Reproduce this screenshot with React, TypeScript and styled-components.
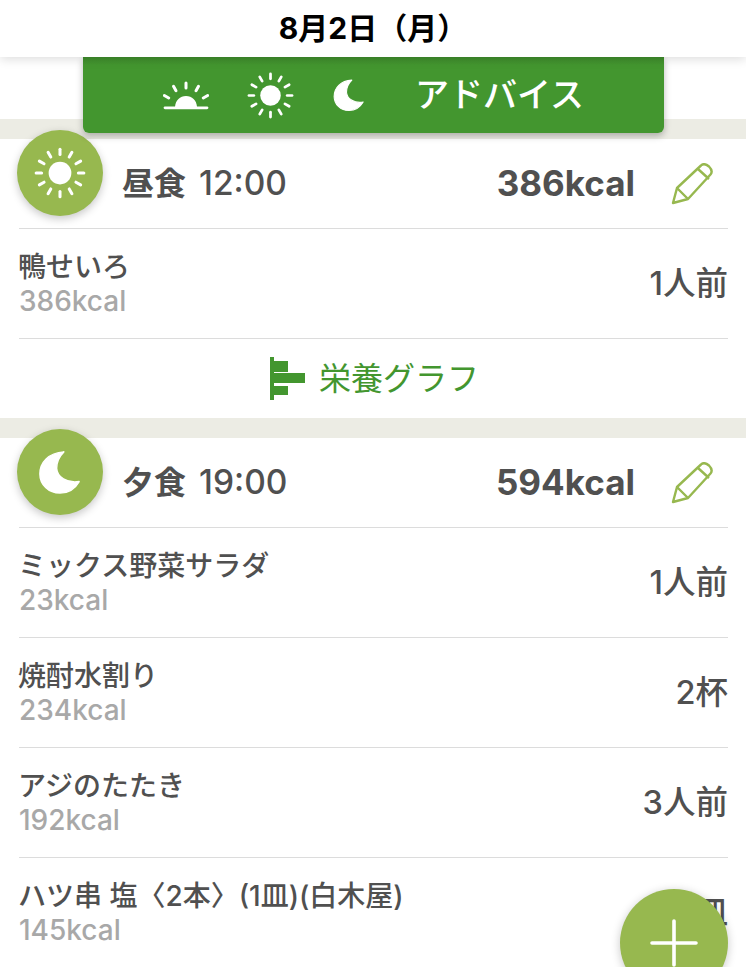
import React from 'react';
import styled, { createGlobalStyle } from 'styled-components';

const GlobalStyle = createGlobalStyle`
  html, body {
    margin: 0;
    padding: 0;
    height: 967px;
    overflow: hidden;
    background: #fff;
    font-family: Inter, 'Noto Sans CJK JP', sans-serif;
  }
  * { box-sizing: border-box; }
`;

const SunIcon = ({ size, color }: { size: number; color: string }) => (
  <svg width={size} height={size} viewBox='0 0 48 48'>
    <circle cx='24' cy='24' r='10.5' fill={color} />
    {[0, 30, 60, 90, 120, 150, 180, 210, 240, 270, 300, 330].map((deg) => (
      <line
        key={deg}
        x1='24'
        y1='2'
        x2='24'
        y2='7'
        stroke={color}
        strokeWidth='2.8'
        strokeLinecap='round'
        transform={`rotate(${deg} 24 24)`}
      />
    ))}
  </svg>
);

const MoonIcon = ({ size, color }: { size: number; color: string }) => (
  <svg width={size} height={size} viewBox='0 0 48 48'>
    <path
      d='M28 3 C12 4 3 14 3 26 C3 37 12 46 24 46 C33 46 40 41 44 34 C31 36 21 29 20.5 20 C20.5 13 23 8 28 3 Z'
      fill={color}
      stroke={color}
      strokeWidth='1.5'
      strokeLinejoin='round'
    />
  </svg>
);

const SunriseIcon = () => (
  <svg width='46' height='29' viewBox='0 0 46 29'>
    <path d='M12 26 C12.5 19 17 15 23 15 C29 15 33.5 19 34 26 Z' fill='#fff' />
    <line x1='2' y1='26.8' x2='44' y2='26.8' stroke='#fff' strokeWidth='2.8' strokeLinecap='round' />
    {[-60, -30, 0, 30, 60].map((deg) => (
      <line
        key={deg}
        x1='23'
        y1='2'
        x2='23'
        y2='7'
        stroke='#fff'
        strokeWidth='3'
        strokeLinecap='round'
        transform={`rotate(${deg} 23 27)`}
      />
    ))}
  </svg>
);

const PencilIcon = () => (
  <svg width='42' height='42' viewBox='0 0 42 42'>
    <path
      d='M2 40 L6 25 L30 2.5 C32 0.5 35 1 38 3.5 C41 6.5 41.5 9 39.5 11.5 L17 36 Z M6 25 L17 36 M27 6 L38 16'
      fill='none'
      stroke='#97b84f'
      strokeWidth='2.4'
      strokeLinejoin='round'
    />
  </svg>
);

const GraphIcon = () => (
  <svg width='35' height='43' viewBox='0 0 35 43'>
    <rect x='0' y='0' width='4' height='43' fill='#43962f' />
    <rect x='4' y='4' width='14' height='11' fill='#43962f' />
    <rect x='4' y='16' width='31' height='10' fill='#43962f' />
    <rect x='4' y='29' width='14' height='9' fill='#43962f' />
  </svg>
);

type Food = { name: string; kcal: string; amount: string };

const lunch: Food[] = [{ name: '鴨せいろ', kcal: '386kcal', amount: '1人前' }];
const dinner: Food[] = [
  { name: 'ミックス野菜サラダ', kcal: '23kcal', amount: '1人前' },
  { name: '焼酎水割り', kcal: '234kcal', amount: '2杯' },
  { name: 'アジのたたき', kcal: '192kcal', amount: '3人前' },
  { name: 'ハツ串 塩〈2本〉(1皿)(白木屋)', kcal: '145kcal', amount: '1皿' },
];

const FoodRow = ({ food }: { food: Food }) => (
  <Row>
    <div>
      <FoodName>{food.name}</FoodName>
      <FoodKcal>{food.kcal}</FoodKcal>
    </div>
    <Amount>{food.amount}</Amount>
  </Row>
);

const MealHeader = ({ icon, label, time, kcal }: { icon: React.ReactNode; label: string; time: string; kcal: string }) => (
  <Head>
    <Badge>{icon}</Badge>
    <MealLabel>
      <b>{label}</b>
      <span>{time}</span>
    </MealLabel>
    <MealKcal>{kcal}</MealKcal>
    <EditButton>
      <PencilIcon />
    </EditButton>
  </Head>
);

const App = () => (
  <Page>
    <GlobalStyle />
    <Title>8月2日（月）</Title>
    <AdvicePanel>
      <SunriseIcon />
      <SunIcon size={47} color='#fff' />
      <MoonIcon size={34} color='#fff' />
      <AdviceText>アドバイス</AdviceText>
    </AdvicePanel>
    <TopGap />
    <Band />
    <MealHeader icon={<SunIcon size={52} color='#fff' />} label='昼食' time='12:00' kcal='386kcal' />
    {lunch.map((food) => (
      <FoodRow key={food.name} food={food} />
    ))}
    <GraphRow>
      <GraphIcon />
      <GraphText>栄養グラフ</GraphText>
    </GraphRow>
    <Band />
    <MealHeader icon={<MoonIcon size={46} color='#fff' />} label='夕食' time='19:00' kcal='594kcal' />
    {dinner.map((food) => (
      <FoodRow key={food.name} food={food} />
    ))}
    <AddButton>
      <svg width='48' height='48' viewBox='0 0 48 48'>
        <path d='M24 2 V46 M2 24 H46' stroke='#fff' strokeWidth='3.6' strokeLinecap='round' />
      </svg>
    </AddButton>
  </Page>
);

export default App;

const Page = styled.div`
  position: relative;
  width: 746px;
  height: 967px;
  overflow: hidden;
  background: #fff;
  color: #505050;
`;

const Title = styled.header`
  position: relative;
  z-index: 3;
  height: 57px;
  padding-bottom: 5px;
  display: flex;
  align-items: center;
  justify-content: center;
  background: #fff;
  color: #000;
  font-size: 30px;
  font-weight: 700;
  box-shadow: 0 2px 10px rgba(0, 0, 0, 0.14);
`;

const AdvicePanel = styled.div`
  position: absolute;
  z-index: 2;
  top: 57px;
  left: 83px;
  width: 581px;
  height: 76px;
  display: flex;
  align-items: center;
  padding: 0 0 0 80px;
  gap: 38px;
  background: linear-gradient(#3f8c2c, #43962f 10%);
  border-radius: 0 0 6px 6px;
  box-shadow: 0 3px 7px rgba(0, 0, 0, 0.28);
`;

const AdviceText = styled.span`
  margin-left: 11px;
  color: #fff;
  font-size: 34px;
  font-weight: 500;
  line-height: 1;
`;

const TopGap = styled.div`
  height: 62px;
`;

const Band = styled.div`
  height: 20px;
  background: #ecece4;
`;

const Head = styled.div`
  position: relative;
  height: 89px;
  margin: 0 18px 0 19px;
  display: flex;
  align-items: center;
`;

const Badge = styled.div`
  position: absolute;
  left: -2px;
  top: -9px;
  width: 86px;
  height: 86px;
  display: flex;
  align-items: center;
  justify-content: center;
  border-radius: 50%;
  background: #97b84f;
  box-shadow: 0 3px 8px rgba(0, 0, 0, 0.22);
`;

const MealLabel = styled.div`
  margin-left: 103px;
  padding-bottom: 6px;
  display: flex;
  align-items: baseline;
  gap: 13px;
  font-size: 32px;
  b {
    font-weight: 700;
  }
  span {
    font-size: 33.5px;
    font-weight: 500;
  }
`;

const MealKcal = styled.div`
  margin-left: auto;
  padding-bottom: 1px;
  font-size: 35px;
  font-weight: 700;
`;

const EditButton = styled.div`
  width: 93px;
  padding-left: 36px;
  display: flex;
`;

const Row = styled.div`
  height: 110px;
  margin: 0 18px 0 19px;
  display: flex;
  align-items: center;
  justify-content: space-between;
  border-top: 1px solid #dcdcdc;
`;

const FoodName = styled.div`
  margin: -1px 0 0 -1px;
  font-size: 28px;
  font-weight: 500;
  line-height: 36px;
  white-space: nowrap;
`;

const FoodKcal = styled.div`
  color: #a8a8a8;
  font-size: 28px;
  font-weight: 500;
  line-height: 32px;
`;

const Amount = styled.div`
  padding-bottom: 6px;
  font-size: 32.5px;
  font-weight: 500;
`;

const GraphRow = styled(Row)`
  height: 80px;
  justify-content: center;
  gap: 14px;
  padding-left: 2px;
`;

const GraphText = styled.span`
  padding-bottom: 6px;
  color: #43962f;
  font-size: 32px;
  font-weight: 400;
`;

const AddButton = styled.div`
  position: absolute;
  left: 620px;
  top: 889px;
  width: 108px;
  height: 108px;
  display: flex;
  align-items: center;
  justify-content: center;
  border-radius: 50%;
  background: #97b84f;
  box-shadow: 0 2px 10px rgba(0, 0, 0, 0.22);
`;
